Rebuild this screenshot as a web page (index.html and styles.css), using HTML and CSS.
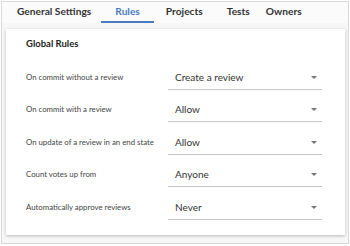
FILE: index.html
```html
<!DOCTYPE html>
<html lang="en">
<head>
  <meta charset="UTF-8" />
  <title>Rules</title>
  <link rel="stylesheet" href="styles.css">
</head>
<body>

<div class="frame">
  <div class="tabs">
    <div class="tab tab-general">General Settings</div>
    <div class="tab tab-rules active">Rules</div>
    <div class="tab tab-projects">Projects</div>
    <div class="tab tab-tests">Tests</div>
    <div class="tab tab-owners">Owners</div>
  </div>

  <div class="card">
    <div class="card-title">Global Rules</div>

    <div class="rule-row">
      <div class="rule-label">On commit without a review</div>
      <div class="select">Create a review<span class="arrow"></span></div>
    </div>
    <div class="rule-row">
      <div class="rule-label">On commit with a review</div>
      <div class="select">Allow<span class="arrow"></span></div>
    </div>
    <div class="rule-row">
      <div class="rule-label">On update of a review in an end state</div>
      <div class="select">Allow<span class="arrow"></span></div>
    </div>
    <div class="rule-row">
      <div class="rule-label">Count votes up from</div>
      <div class="select">Anyone<span class="arrow"></span></div>
    </div>
    <div class="rule-row">
      <div class="rule-label">Automatically approve reviews</div>
      <div class="select">Never<span class="arrow"></span></div>
    </div>
  </div>
</div>

</body>
</html>
```

FILE: styles.css
```css
body {
  margin: 0;
  font-family: Lato, "Open Sans", sans-serif;
  background: #fff;
}

.frame {
  margin: 1px;
  height: 241px;
  border: 1px solid #d9d9d9;
  background: #f7f7f7;
}

.tabs {
  display: flex;
  height: 20px;
  padding-top: 1px;
  background: #fbfbfb;
}

.tab {
  white-space: nowrap;
  font-size: 10.2px;
  font-weight: bold;
  color: #333;
  line-height: 16px;
  border-bottom: 2px solid transparent;
}

.tab-general {
  padding: 0 10px 0 15px;
}

.tab-rules {
  padding: 0 14px;
}

.tab-projects {
  padding: 0 12px;
}

.tab-tests {
  padding: 0 0 0 12px;
}

.tab-owners {
  padding: 0 0 0 16px;
}

.tab.active {
  color: #4a7ac0;
  border-bottom-color: #4a7ac0;
}

.card {
  margin: 6px 3px 0 4px;
  height: 206px;
  background: #fff;
  box-shadow: 0 1px 3px rgba(0, 0, 0, 0.25);
  padding: 8px 0 0 20px;
  box-sizing: border-box;
}

.card-title {
  font-size: 9.5px;
  font-weight: bold;
  color: #222;
  line-height: 13px;
  margin-bottom: 7px;
}

.rule-row {
  display: flex;
  align-items: flex-end;
  height: 32.5px;
}

.rule-label {
  width: 142px;
  font-size: 7.8px;
  color: #444;
  line-height: 11px;
  margin-bottom: 7px;
}

.select {
  position: relative;
  width: 154px;
  height: 22px;
  box-sizing: border-box;
  border-bottom: 1px solid #c8c8c8;
  padding-left: 7px;
  font-size: 10px;
  line-height: 18px;
  color: #333;
}

.arrow {
  position: absolute;
  right: 5px;
  top: 8px;
  border-left: 3px solid transparent;
  border-right: 3px solid transparent;
  border-top: 3px solid #777;
}
```
